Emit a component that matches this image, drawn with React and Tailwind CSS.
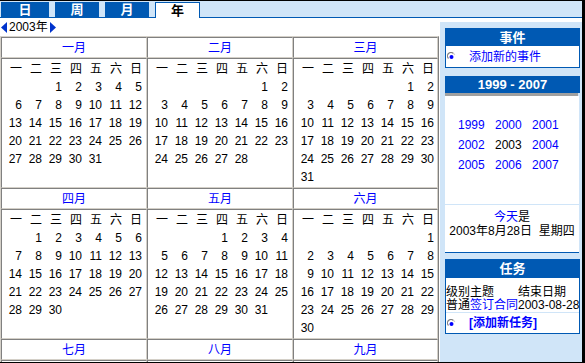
import React from "react";

const monthNames = ["一月", "二月", "三月", "四月", "五月", "六月", "七月", "八月", "九月"];
const weekNames = ["一", "二", "三", "四", "五", "六", "日"];

function monthCells(m) {
  const first = (new Date(2003, m, 1).getDay() + 6) % 7;
  const days = new Date(2003, m + 1, 0).getDate();
  const cells = [];
  for (let i = 0; i < 42; i++) {
    const d = i - first + 1;
    cells.push(d >= 1 && d <= days ? d : "");
  }
  return cells;
}

// months in the last row only show their header, the body is below the fold
function Month({ m, folded }) {
  return (
    <div className="flex flex-col">
      <div className="h-[21px] border border-t-[#808080] border-l-[#808080] border-b-[#d4d0c8] border-r-[#d4d0c8] flex items-center justify-center text-[#0000ff] leading-none">
        {monthNames[m]}
      </div>
      <div className="h-[130px] border border-t-[#808080] border-l-[#808080] border-b-[#d4d0c8] border-r-[#d4d0c8] pt-px">
        {!folded && (
          <div className="grid grid-cols-[repeat(7,20px)] auto-rows-[18px] leading-[18px] text-right">
            {weekNames.map((w) => (
              <span key={w}>{w}</span>
            ))}
            {monthCells(m).map((d, i) => (
              <span key={i}>{d}</span>
            ))}
          </div>
        )}
      </div>
    </div>
  );
}

function Bullet() {
  return (
    <svg width="9" height="9" viewBox="0 0 9 9" className="shrink-0">
      <path d="M1.5 6.5 A3.5 3.5 0 0 1 6.5 1.5" stroke="#808080" strokeWidth="1.2" fill="none" />
      <path d="M6.5 1.5 A3.5 3.5 0 0 1 7.8 3" stroke="#d4d0c8" strokeWidth="1.2" fill="none" />
      <circle cx="4.5" cy="5" r="2" fill="#0000ff" />
    </svg>
  );
}

function Tab({ label, active, className }) {
  if (active) {
    return (
      <div className={`relative -mb-px h-[16px] bg-white border border-b-0 border-[#0059b3] flex items-center justify-center font-bold text-[13px] text-black leading-none ${className}`}>
        {label}
      </div>
    );
  }
  return (
    <div className={`h-[15px] bg-[#0059b3] flex items-center justify-center font-bold text-[13px] text-white leading-none ${className}`}>
      {label}
    </div>
  );
}

export default function App() {
  const years = [1999, 2000, 2001, 2002, 2003, 2004, 2005, 2006, 2007];
  return (
    <div className="w-[585px] h-[363px] overflow-hidden flex flex-col bg-white border-t border-r-[3px] border-b border-black font-['Liberation_Sans','Noto_Sans_CJK_SC',sans-serif] text-[12px] text-black">
      {/* tabs */}
      <div className="h-[17px] shrink-0 bg-[#d0e5f8] border-b border-[#0059b3] flex items-end">
        <Tab label="日" className="ml-px w-[48px]" />
        <Tab label="周" className="ml-[6px] w-[44px]" />
        <Tab label="月" className="ml-[6px] w-[44px]" />
        <Tab label="年" active className="ml-[6px] w-[45px]" />
      </div>

      <div className="flex flex-1 min-h-0">
        {/* calendar */}
        <div className="w-[439px] shrink-0 flex flex-col">
          <div className="h-[18px] shrink-0 flex items-center pl-px">
            <svg width="6" height="11" viewBox="0 0 6 11">
              <polygon points="6,0 0,5.5 6,11" fill="#0033cc" />
            </svg>
            <span className="ml-[2px] leading-none">2003年</span>
            <svg width="6" height="11" viewBox="0 0 6 11" className="ml-[2px]">
              <polygon points="0,0 6,5.5 0,11" fill="#0033cc" />
            </svg>
          </div>
          <div className="shrink-0 grid grid-cols-[146px_146px_145px] w-fit border border-t-[#d4d0c8] border-l-[#d4d0c8] border-b-[#808080] border-r-[#808080]">
            {monthNames.map((_, m) => (
              <Month key={m} m={m} folded={m >= 6} />
            ))}
          </div>
        </div>

        {/* sidebar */}
        <div className="ml-px mt-[4px] w-[142px] shrink-0 bg-[#d0e5f8] pt-[6px] pl-[5px] pr-[2px] flex flex-col">
          {/* events */}
          <div className="h-[18px] shrink-0 bg-[#0059b3] text-white font-bold text-[13px] flex items-center justify-center leading-none">
            事件
          </div>
          <div className="h-[22px] shrink-0 bg-white border border-t-0 border-[#0059b3] flex items-center">
            <span className="ml-px">
              <Bullet />
            </span>
            <span className="ml-[13px] text-[#0000ff] leading-none">添加新的事件</span>
          </div>

          {/* years */}
          <div className="mt-[8px] h-[17px] shrink-0 bg-[#0059b3] text-white font-bold text-[13px] flex items-center justify-center leading-none">
            1999 - 2007
          </div>
          <div className="h-[3px] shrink-0 bg-[#a0a0a0] mr-[2px]"></div>
          <div className="h-[157px] shrink-0 bg-white border-b border-[#0059b3] mr-px flex flex-col">
            <div className="pt-[19px] pl-[13px] grid grid-cols-[repeat(3,37px)] auto-rows-[20px] leading-[20px]">
              {years.map((y) => (
                <span key={y} className={y === 2003 ? "text-black" : "text-[#0000ff]"}>
                  {y}
                </span>
              ))}
            </div>
            <div className="mt-[29px] h-px bg-[#d0e5f8]"></div>
            <div className="pt-[5px] flex flex-col items-center leading-[14px]">
              <div>
                <span className="text-[#0000ff]">今天</span>是
              </div>
              <div>2003年8月28日&nbsp;&nbsp;星期四</div>
            </div>
          </div>

          {/* tasks */}
          <div className="mt-[6px] h-[19px] shrink-0 bg-[#0059b3] text-white font-bold text-[13px] flex items-center justify-center leading-none">
            任务
          </div>
          <div className="shrink-0 bg-white border border-t-0 border-[#0059b3] flex flex-col">
            <div className="pt-[8px] grid grid-cols-[24px_48px_1fr] auto-rows-[13px] leading-[13px] whitespace-nowrap">
              <span>级别</span>
              <span>主题</span>
              <span>结束日期</span>
              <span>普通</span>
              <span className="text-[#0000ff]">签订合同</span>
              <span>2003-08-28</span>
            </div>
            <div className="h-px bg-[#d0e5f8]"></div>
            <div className="h-[20px] flex items-center">
              <span className="ml-px">
                <Bullet />
              </span>
              <span className="ml-[13px] text-[#0000ff] font-bold leading-none">[添加新任务]</span>
            </div>
          </div>
        </div>
      </div>
    </div>
  );
}
